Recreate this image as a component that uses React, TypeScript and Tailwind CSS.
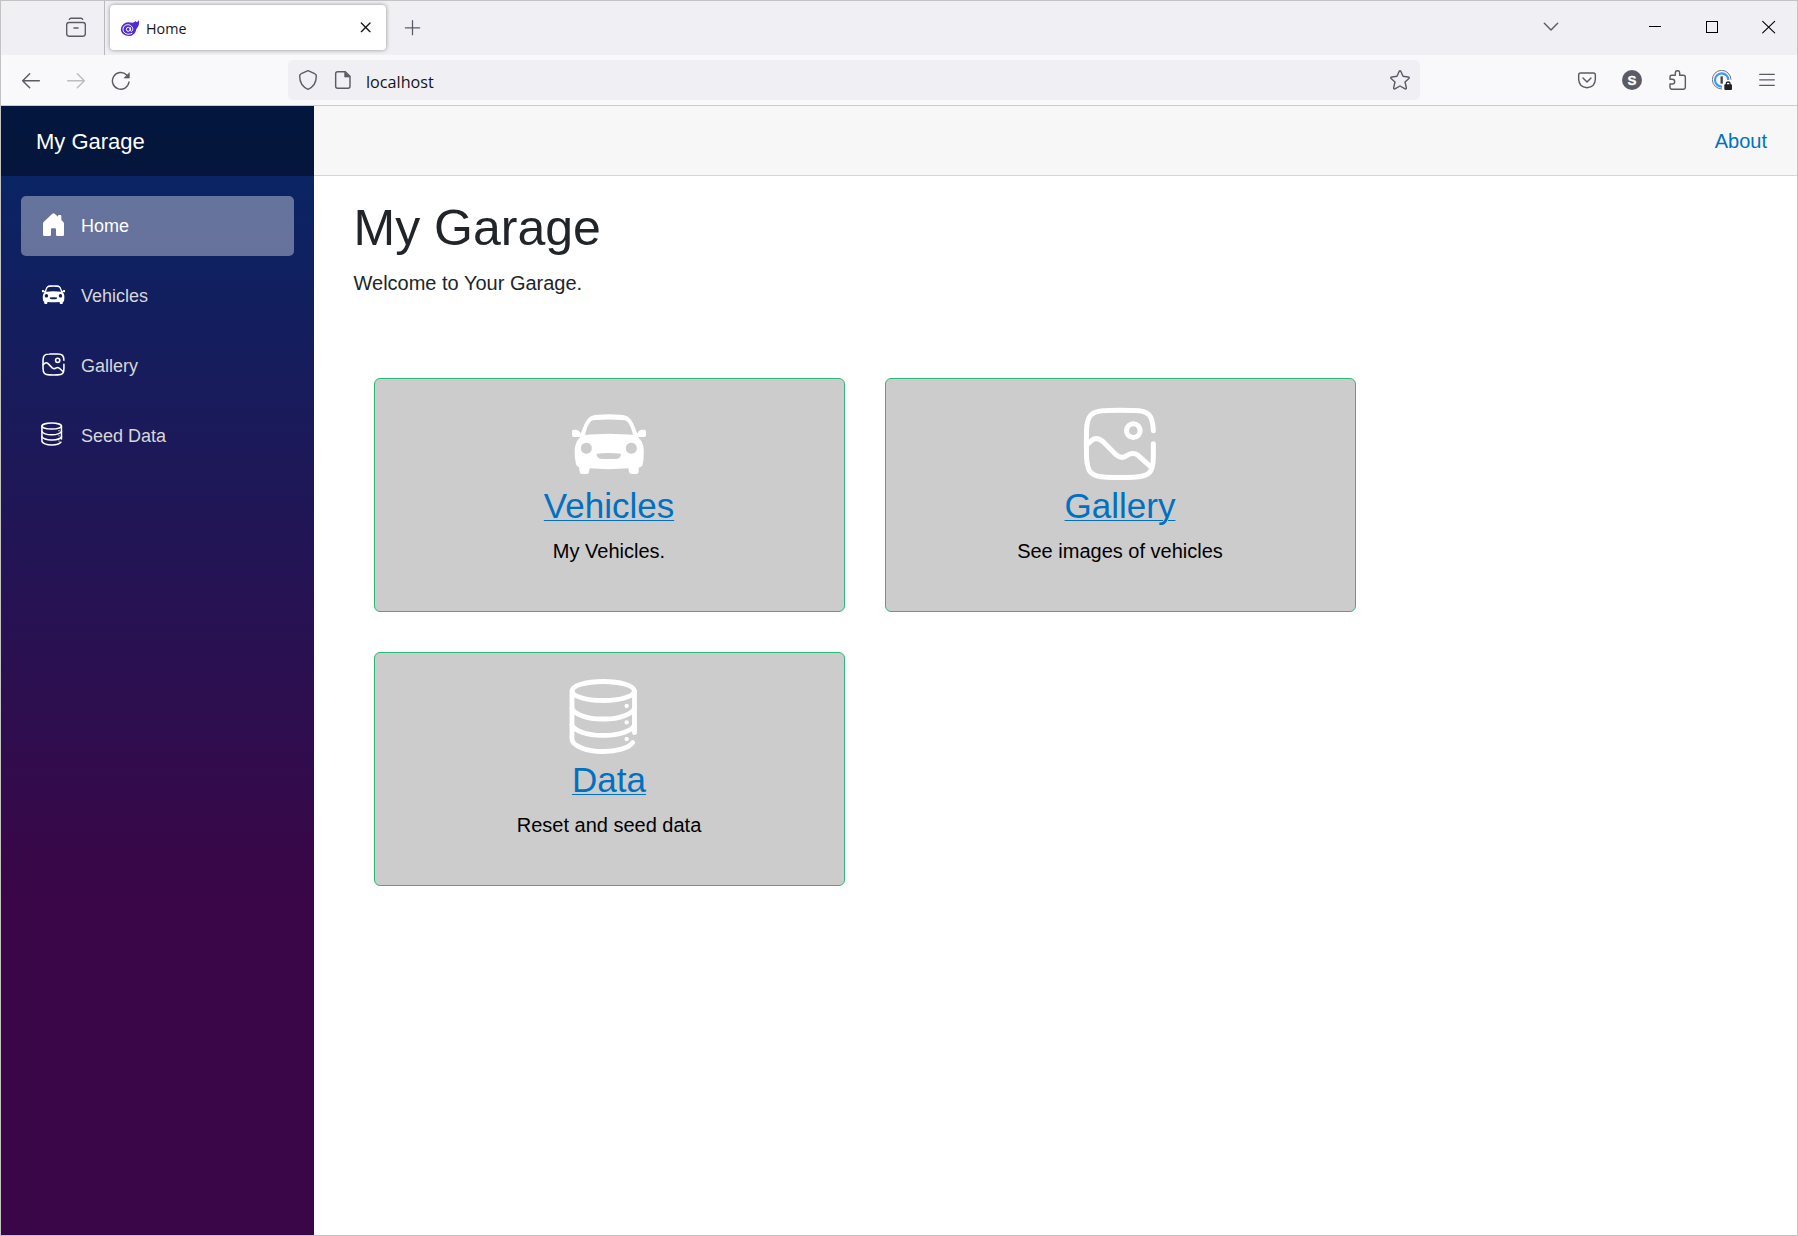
import type { ReactNode } from "react";

type IconProps = { box: string; className?: string; children: ReactNode; crisp?: boolean };

function Icon({ box, className = "size-5", children, crisp }: IconProps) {
  return (
    <svg
      viewBox={box}
      className={`${className} shrink-0`}
      fill="none"
      stroke="#5b5b66"
      strokeWidth={4.3}
      strokeLinecap="round"
      strokeLinejoin="round"
      shapeRendering={crisp ? "crispEdges" : undefined}
    >
      {children}
    </svg>
  );
}

function CarIcon({ className }: { className: string }) {
  return (
    <svg viewBox="117 101 240 240" className={className} fill="#fff">
      <path
        fillRule="evenodd"
        d="M152 190 L160 170 Q168 149 177 142 Q184 134 204 133 Q237 130 270 133 Q290 134 297 142 Q306 149 314 170 L322 190 Q327 178 337 178 H344 Q348 178 348 183 V194 Q348 200 343 200 H324 Q337 212 340 226 Q342 240 341 258 Q340 280 336 288 Q332 291 326 292 V304 Q326 311 319 311 H305 Q298 311 297 304 L295 294 Q237 299 179 294 L177 304 Q177 311 170 311 H156 Q149 311 149 304 L147 291 Q140 288 138 282 Q133 262 134 238 Q136 214 151 200 H131 Q126 200 126 194 V183 Q126 178 131 178 H137 Q147 178 152 190 Z
        M165 194 Q174 192 200 192 Q237 189 274 192 Q300 192 309 194 Q302 164 291 153 Q288 149 276 149 Q237 146 198 149 Q186 149 183 153 Q172 164 165 194 Z
        M169 217 a16.500 16.500 0 1 0 .01 0 Z M304 217 a16.500 16.500 0 1 0 .01 0 Z
        M200 250 Q237 246 273 250 Q273 266 255 266 H218 Q200 266 200 250 Z"
      />
    </svg>
  );
}

function GalleryIcon({ className }: { className: string }) {
  return (
    <svg
      viewBox="240 102 240 240"
      className={className}
      fill="none"
      stroke="#fff"
      strokeWidth="15"
      strokeLinecap="round"
      strokeLinejoin="round"
    >
      <path d="M460 182 C458 136 447 121 400 121.500 C387 121 333 121 320 121.500 C273 122 260 138 259.500 182 C259 205 259 238 259.500 260 C261 308 275 321 320 321.500 C333 322 387 322 400 321.500 C447 320 460 308 460 260 V221" />
      <path d="M261 224 L275 211 Q291 199 308 214 L348 254 Q365 269 382 256 Q399 245 414 256 L451 289" />
      <circle cx="400" cy="182" r="20.500" />
    </svg>
  );
}

function DatabaseIcon({ className }: { className: string }) {
  return (
    <svg
      viewBox="207 114 240 240"
      className={className}
      fill="none"
      stroke="#fff"
      strokeWidth="14.500"
      strokeLinecap="round"
      strokeLinejoin="round"
    >
      <ellipse cx="309.500" cy="153" rx="93.500" ry="28.500" />
      <path d="M216 153 V297 C216 318 262 335 309 334.500 C350 335 385 324 398 308" />
      <path d="M403.500 153 V278" />
      <path d="M216 205 C222 222 262 238 309.500 237 C357 238 397 222 403.500 205" />
      <path d="M216 255 C222 272 262 287 309.500 286 C357 287 397 272 403.500 255" />
      <g fill="#fff" stroke="none">
        <circle cx="380" cy="198" r="6.500" />
        <circle cx="380" cy="247" r="6.500" />
        <circle cx="380" cy="297" r="6.500" />
      </g>
    </svg>
  );
}

function HomeIcon({ className }: { className: string }) {
  return (
    <svg viewBox="123 126 75 75" className={className} fill="#fff">
      <path d="M157 131 Q160 128 164 131 L174 140 V138 Q174 135 177 135 H181 Q184 135 184 138 V150 L190 156 Q192 158 192 161 V194 Q192 198 188 198 H172 Q168 198 168 194 V178 Q168 175 165 175 H156 Q153 175 153 178 V194 Q153 198 149 198 H133 Q129 198 129 194 V161 Q129 158 131 156 Z" />
    </svg>
  );
}

function TabStrip() {
  return (
    <div className="flex h-[54px] bg-[#f0f0f4]">
      <div className="w-[104px] border-r border-[#b8b8bd] pt-4 pl-[65px]">
        <Icon box="198 51 60 60">
          <path d="M208 58 Q209 54.500 213 54.500 H243 Q247 54.500 248 58" />
          <rect x="200" y="67.500" width="56" height="41" rx="7" />
          <path d="M222 84 H234" strokeWidth="5" />
        </Icon>
      </div>
      <div className="mt-1 ml-[5px] flex h-[45px] w-[276px] items-center rounded-[4px] bg-white pl-[10px] shadow-[0_0_4px_rgba(0,0,0,0.4)]">
        <Icon box="360 54 60 60">
          <path
            d="M384 67 Q393 67 399 68 Q404 67 407 63 Q408 67 411 66 Q415 64 417 60 Q420 75 409 87 Q407 102 394 107 Q381 111 370 103 Q361 95 363 84 Q368 69 384 67 Z"
            fill="#512bd4"
            stroke="none"
          />
          <path
            d="M396 100 C384 107 369 100 369 88 C369 77 380 72 389 75 C398 79 401 88 396 93 C393 95 390.500 93 391 90 V83 M391 88 A6 6 0 1 1 379 88 A6 6 0 1 1 391 88"
            stroke="#fff"
            strokeWidth="3"
          />
        </Icon>
        <span className="ml-[6px] flex-1 pt-[2px] font-['Open_Sans',sans-serif] text-[14.3px] leading-5 text-[#15141a]">
          Home
        </span>
        <Icon box="1071 54 54 54" className="mr-[11px] mb-px size-[18px]">
          <path d="M1084 69 L1110 95 M1110 69 L1084 95" stroke="#15141a" strokeWidth="4" />
        </Icon>
      </div>
      <div className="mt-[17px] ml-4 flex flex-1">
        <Icon box="1206 54 60 60">
          <path d="M1216 83.500 H1259 M1237.500 62 V104" strokeWidth="3.800" />
        </Icon>
        <div className="ml-auto flex pr-[19px]">
          <Icon box="513 54 60 60">
            <path d="M523 70 L543 90 L563 70" />
          </Icon>
          <Icon box="825 54 60 60" className="ml-[84px] size-5" crisp>
            <path d="M837 79.500 H873" stroke="#000" strokeWidth="3" strokeLinecap="butt" />
          </Icon>
          <Icon box="996 54 60 60" className="ml-[37px] size-5" crisp>
            <path d="M1009.500 64.500 H1042.500 V97.500 H1009.500 Z" stroke="#000" strokeWidth="3" strokeLinejoin="miter" />
          </Icon>
          <Icon box="1164 54 60 60" className="ml-9 size-5">
            <path d="M1178 64 L1214 98.500 M1214 64 L1178 98.500" stroke="#000" strokeWidth="3.300" />
          </Icon>
        </div>
      </div>
    </div>
  );
}

function Toolbar() {
  return (
    <div className="flex h-[51px] items-center border-b border-[#cccccf] bg-[#f9f9fb] pr-5 pl-5">
      <Icon box="63 210 60 60">
        <path d="M118 242 H68 M89 221 L68 242 L89 263" />
      </Icon>
      <Icon box="198 210 60 60" className="ml-[25px] size-5">
        <path d="M203 242 H253 M232 221 L253 242 L232 263" stroke="#bcbcc1" />
      </Icon>
      <Icon box="333 210 60 60" className="ml-[25px] size-5">
        <path d="M387 246 A25 25 0 1 1 380 225" />
        <path d="M388 219 V234 H373 Z" fill="#5b5b66" strokeWidth="2" />
      </Icon>
      <div className="ml-[157px] flex h-10 w-[1132px] items-center rounded-[5px] bg-[#f0f0f4] px-[10px]">
        <Icon box="894 210 60 60">
          <path d="M924 212 L944 221 Q949 223 949 228 Q949 257 924 268 Q899 257 899 228 Q899 223 904 221 Z" />
        </Icon>
        <Icon box="999 210 60 60" className="ml-[15px] size-5">
          <path d="M1036 215 H1013 Q1007 215 1007 221 V259 Q1007 265 1013 265 H1044 Q1050 265 1050 259 V229 Z" />
          <path d="M1034 216 V231 H1049 Z" fill="#5b5b66" strokeWidth="2" />
        </Icon>
        <span className="ml-[13px] flex-1 pt-1 font-['Open_Sans',sans-serif] text-[16.2px] leading-6 text-[#15141a]">
          localhost
        </span>
        <Icon box="60 210 60 60">
          <path d="M87 215 Q90 210 93 215 L99 229 L114 231 Q120 232 116 236 L105 246 L109 263 Q109 269 104 266 L90 258 L76 266 Q71 269 71 263 L75 246 L64 236 Q60 232 66 231 L81 229 Z" />
        </Icon>
      </div>
      <Icon box="621 210 60 60" className="ml-[157px] size-5">
        <path d="M632 219 H670 Q676 219 676 225 V238 Q675 262 651 263 Q627 262 626 238 V225 Q626 219 632 219 Z M639 234 L651 246 L663 234" />
      </Icon>
      <Icon box="756 210 60 60" className="ml-[25px] size-5">
        <circle cx="786" cy="240" r="30" fill="#5b5b66" stroke="none" />
        <text
          x="786"
          y="254"
          textAnchor="middle"
          fontFamily="Liberation Sans, sans-serif"
          fontWeight="700"
          fontSize="40"
          fill="#fff"
          stroke="#fff"
          strokeWidth="1"
        >
          S
        </text>
      </Icon>
      <Icon box="894 210 60 60" className="ml-[26px] size-5">
        <path d="M900 238 V231 Q900 226 905 226 H916 V218 Q916 212 922.500 212 Q929 212 929 218 V226 H940 Q946 226 946 232 V262 Q946 268 940 268 H906 Q900 268 900 262 V252 H907 Q914 252 914 245 Q914 238 907 238 Z" />
      </Icon>
      <Icon box="1026 210 60 60" className="ml-6 size-5">
        <path d="M1083 238 A28 28 0 1 0 1055 267" stroke="#77777c" strokeWidth="3" />
        <path d="M1075 240 A20 20 0 1 0 1056 260" stroke="#3b99fc" strokeWidth="6.500" strokeLinecap="butt" />
        <path d="M1055 229 V251" stroke="#444" strokeWidth="7" strokeLinecap="butt" />
        <rect x="1063" y="253" width="23" height="17" rx="3" fill="#222" stroke="none" />
        <path d="M1069 254 V250 Q1069 246 1074.500 246 Q1080 246 1080 250 V254" stroke="#222" strokeWidth="4" />
      </Icon>
      <Icon box="1161 210 60 60" className="ml-[25px] size-5">
        <path d="M1169 223 H1213 M1169 239.500 H1213 M1169 256 H1213" strokeWidth="3.800" />
      </Icon>
    </div>
  );
}

function NavItem({ icon, label, active }: { icon: ReactNode; label: string; active?: boolean }) {
  return (
    <a
      className={`flex h-[60px] items-center rounded-[5px] pl-5 text-[18px] leading-[60px] ${
        active ? "bg-white/37 text-white" : "text-[#d7d7d7]"
      }`}
    >
      <span className="mb-[3px] flex">{icon}</span>
      <span className="ml-[15px]">{label}</span>
    </a>
  );
}

function Sidebar() {
  return (
    <aside className="w-[313px] shrink-0 bg-[linear-gradient(180deg,rgb(5,39,103)_0%,#3a0647_70%)]">
      <div className="flex h-[70px] items-center bg-black/40 pl-[35px] text-[22px] text-white">My Garage</div>
      <nav className="flex flex-col gap-[10px] px-5 pt-5">
        <NavItem active label="Home" icon={<HomeIcon className="size-[25px]" />} />
        <NavItem label="Vehicles" icon={<CarIcon className="size-[25px]" />} />
        <NavItem label="Gallery" icon={<GalleryIcon className="size-[25px]" />} />
        <NavItem label="Seed Data" icon={<DatabaseIcon className="size-[25px]" />} />
      </nav>
    </aside>
  );
}

function Card({ icon, title, text }: { icon: ReactNode; title: string; text: string }) {
  return (
    <section className="flex h-[234px] w-[471px] flex-col items-center rounded-[6px] border border-[#2abb74] bg-[#ccc] pt-[25px] pr-px">
      {icon}
      <h3 className="text-[35px] leading-[42px] text-[#0071c1] underline decoration-1 underline-offset-2">{title}</h3>
      <p className="mt-[9px] text-[20px] leading-[30px] text-black">{text}</p>
    </section>
  );
}

export default function App() {
  return (
    <div className="flex h-[1236px] w-[1798px] flex-col border border-[#c3c3c3] bg-white font-['Liberation_Sans',Arial,sans-serif]">
      <TabStrip />
      <Toolbar />
      <div className="flex flex-1">
        <Sidebar />
        <main className="flex-1">
          <div className="flex h-[70px] items-center justify-end border-b border-[#d6d5d5] bg-[#f7f7f7] pr-[30px]">
            <a className="text-[20px] leading-[30px] text-[#0071c1]">About</a>
          </div>
          <article className="pt-[22px] pl-10 text-[#212529]">
            <h1 className="-ml-[0.5px] text-[50px] leading-[60px]">My Garage</h1>
            <p className="mt-[10px] -ml-[0.5px] text-[20px] leading-[30px]">Welcome to Your Garage.</p>
            <div className="mt-20 ml-5 grid grid-cols-[471px_471px] gap-10">
              <Card icon={<CarIcon className="mb-px size-20" />} title="Vehicles" text="My Vehicles." />
              <Card icon={<GalleryIcon className="mb-px size-20" />} title="Gallery" text="See images of vehicles" />
              <Card icon={<DatabaseIcon className="mb-px size-20" />} title="Data" text="Reset and seed data" />
            </div>
          </article>
        </main>
      </div>
    </div>
  );
}
